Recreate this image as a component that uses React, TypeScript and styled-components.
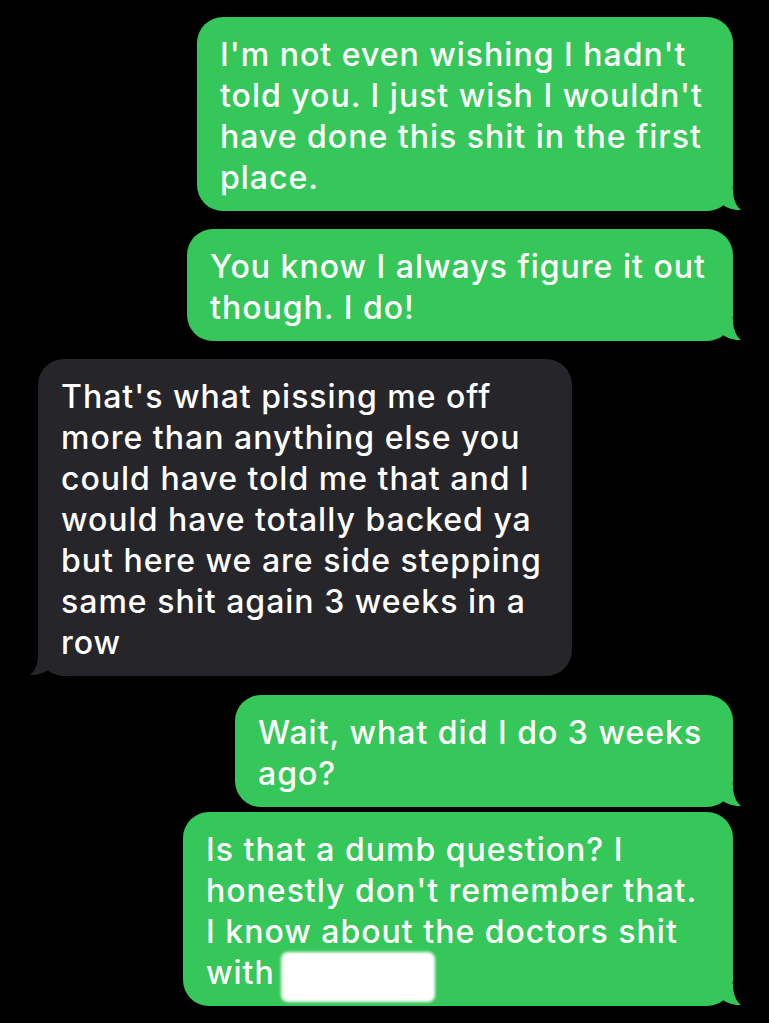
import styled, { createGlobalStyle } from 'styled-components'

const GlobalStyle = createGlobalStyle`
  html, body {
    margin: 0;
    padding: 0;
    background: #000;
  }
`

const Thread = styled.div`
  width: 769px;
  height: 1023px;
  overflow: hidden;
  background: #000;
  display: flex;
  flex-direction: column;
  padding-top: 17px;
  box-sizing: border-box;
`

const Bubble = styled.div<{ $mine: boolean; $width: number; $gap: number }>`
  position: relative;
  box-sizing: border-box;
  width: ${(p) => p.$width}px;
  margin-top: ${(p) => p.$gap}px;
  align-self: ${(p) => (p.$mine ? 'flex-end' : 'flex-start')};
  margin-right: ${(p) => (p.$mine ? '36px' : '0')};
  margin-left: ${(p) => (p.$mine ? '0' : '38px')};
  padding: 17px 0 13px 23px;
  border-radius: 26px;
  background: ${(p) => (p.$mine ? '#35c759' : '#262529')};
  color: #fff;
  font-family: Inter, 'Liberation Sans', sans-serif;
  font-size: 32px;
  font-weight: 500;
  letter-spacing: 1px;
  line-height: 41px;
`

const Line = styled.span`
  display: block;
  white-space: nowrap;
`

const Tail = styled.svg<{ $mine: boolean }>`
  position: absolute;
  bottom: 0;
  width: 40px;
  height: 22px;
  ${(p) => (p.$mine ? 'right: -10px;' : 'left: -10px; transform: scaleX(-1);')}
`

const Redacted = styled.span`
  display: inline-block;
  width: 154px;
  height: 50px;
  margin-left: 6px;
  margin-bottom: -10px;
  vertical-align: top;
  border-radius: 7px;
  background: #fff;
  filter: blur(1.8px);
`

type Msg = {
  mine: boolean
  width: number
  gap: number
  lines: string[]
  redact?: boolean
}

const messages: Msg[] = [
  {
    mine: true,
    width: 536,
    gap: 0,
    lines: [
      "I'm not even wishing I hadn't",
      "told you. I just wish I wouldn't",
      'have done this shit in the first',
      'place.',
    ],
  },
  {
    mine: true,
    width: 546,
    gap: 18,
    lines: ['You know I always figure it out', 'though. I do!'],
  },
  {
    mine: false,
    width: 534,
    gap: 18,
    lines: [
      "That's what pissing me off",
      'more than anything else you',
      'could have told me that and I',
      'would have totally backed ya',
      'but here we are side stepping',
      'same shit again 3 weeks in a',
      'row',
    ],
  },
  {
    mine: true,
    width: 498,
    gap: 19,
    lines: ['Wait, what did I do 3 weeks', 'ago?'],
  },
  {
    mine: true,
    width: 550,
    gap: 5,
    lines: [
      'Is that a dumb question? I',
      "honestly don't remember that.",
      'I know about the doctors shit',
      'with',
    ],
    redact: true,
  },
]

const App = () => {
  return (
    <>
      <GlobalStyle />
      <Thread>
        {messages.map((m, i) => (
          <Bubble key={i} $mine={m.mine} $width={m.width} $gap={m.gap}>
            {m.lines.map((line, j) => (
              <Line key={j}>
                {line}
                {m.redact && j === m.lines.length - 1 && <Redacted />}
              </Line>
            ))}
            <Tail $mine={m.mine} viewBox="0 0 40 22">
              <path
                d="M30 0 C30 10 33 17 38 21 C31 21.5 23 19 17 14 C13 18 7 21 0 21 L0 0 Z"
                fill={m.mine ? '#35c759' : '#262529'}
              />
            </Tail>
          </Bubble>
        ))}
      </Thread>
    </>
  )
}

export default App
